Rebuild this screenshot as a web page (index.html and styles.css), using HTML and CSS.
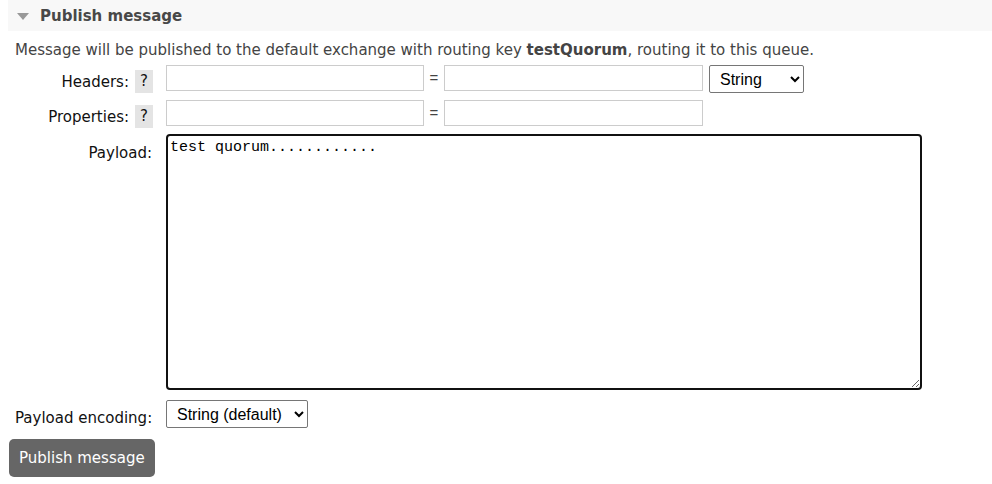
FILE: index.html
```html
<!DOCTYPE html>
<html>
<head>
<meta charset="utf-8">
<link rel="stylesheet" href="styles.css">
</head>
<body>
<div class="section">
  <h2 class="section-head"><span class="tri"></span>Publish message</h2>
  <div class="section-body">
    <p class="intro">Message will be published to the default exchange with routing key <b>testQuorum</b>, routing it to this queue.</p>
    <div class="form">
      <div class="lbl lbl-help">Headers: <span class="help">?</span></div>
      <div class="field field-kv">
        <input class="kv" type="text"><span class="eq">=</span><input class="kv" type="text">
        <select class="sel sel-type"><option>String</option></select>
      </div>
      <div class="lbl lbl-help">Properties: <span class="help">?</span></div>
      <div class="field field-kv">
        <input class="kv" type="text"><span class="eq">=</span><input class="kv" type="text">
      </div>
      <div class="lbl lbl-payload">Payload:</div>
      <div class="field"><textarea class="payload">test quorum............</textarea></div>
      <div class="lbl lbl-enc">Payload encoding:</div>
      <div class="field field-enc"><select class="sel sel-enc"><option>String (default)</option></select></div>
    </div>
    <button class="btn">Publish message</button>
  </div>
</div>
</body>
</html>
```

FILE: styles.css
```css
html, body {
  margin: 0;
  padding: 0;
  background: #fff;
}
body {
  font-family: "DejaVu Sans", Verdana, sans-serif;
  font-size: 15px;
  color: #444;
}
.section {
  padding-left: 8px;
}
.section-head {
  margin: 0;
  height: 31px;
  background: #f8f8f8;
  display: flex;
  align-items: center;
  font-size: 15px;
  font-weight: bold;
  color: #484848;
  padding-left: 9px;
}
.tri {
  width: 0;
  height: 0;
  border-left: 6.5px solid transparent;
  border-right: 6.5px solid transparent;
  border-top: 7px solid #999;
  margin-right: 11px;
  margin-top: 1px;
}
.section-body {
  padding-left: 7px;
}
.intro {
  margin: 0;
  padding-top: 10px;
  line-height: 18px;
  color: #444;
}
.form {
  display: grid;
  grid-template-columns: 138px 1fr;
  column-gap: 13px;
  row-gap: 0;
  margin-top: 6px;
}
.lbl {
  color: #111;
  text-align: right;
  line-height: 18px;
  white-space: nowrap;
}
.lbl-help {
  display: flex;
  justify-content: flex-end;
  align-items: center;
  height: 23px;
  margin-top: 5px;
  gap: 6px;
}
.help {
  display: inline-block;
  background: #e4e4e4;
  color: #111;
  width: 18px;
  height: 23px;
  line-height: 23px;
  text-align: center;
}
.lbl-payload {
  padding-top: 10px;
  padding-right: 1px;
}
.lbl-enc {
  padding-top: 9px;
  padding-right: 1px;
  margin-top: 10px;
}
.field {
  display: flex;
  align-items: flex-start;
}
.field-kv {
  margin-bottom: 7px;
}
.field-kv + .lbl + .field-kv {
  margin-bottom: 8px;
}
.kv {
  box-sizing: border-box;
  width: 258px;
  height: 26px;
  border: 1px solid #ccc;
  border-radius: 0;
  margin: 0;
  padding: 2px 4px;
  font-family: "Liberation Sans", Arial, sans-serif;
  font-size: 14px;
}
.kv + .eq + .kv {
  width: 259px;
}
.eq {
  width: 20px;
  text-align: center;
  line-height: 26px;
  color: #444;
  font-family: "Liberation Sans", Arial, sans-serif;
  font-size: 15px;
}
.sel {
  box-sizing: border-box;
  height: 28px;
  border: 1px solid #767676;
  border-radius: 2px;
  background: #fff;
  color: #000;
  font-family: "Liberation Sans", Arial, sans-serif;
  font-size: 16px;
  padding: 0 2px 0 6px;
  margin: 0;
}
.sel-type {
  width: 95px;
  margin-left: 6px;
}
.sel-enc {
  width: 142px;
}
.field-enc {
  margin-top: 10px;
}
.payload {
  box-sizing: border-box;
  width: 756px;
  height: 256px;
  border: 2px solid #111;
  border-radius: 4px;
  outline: none;
  padding: 3px 2px 2px 2px;
  margin: 0;
  font-family: "Liberation Mono", "Courier New", monospace;
  font-size: 15px;
  line-height: 17px;
  color: #000;
  resize: both;
}
.btn {
  display: block;
  margin: 11px 0 0 -6px;
  height: 38px;
  padding: 0 10px;
  border: none;
  border-radius: 5px;
  background: #666;
  color: #fff;
  font-family: "DejaVu Sans", Verdana, sans-serif;
  font-size: 15px;
}
```
